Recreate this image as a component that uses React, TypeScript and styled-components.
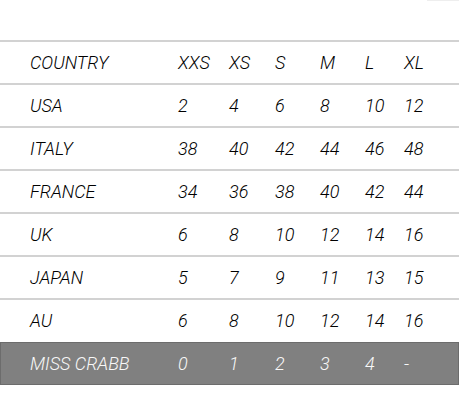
import styled, { createGlobalStyle } from "styled-components";

const SIZES = ["XXS", "XS", "S", "M", "L", "XL"];

const ROWS: { country: string; values: string[]; brand?: boolean }[] = [
  { country: "USA", values: ["2", "4", "6", "8", "10", "12"] },
  { country: "ITALY", values: ["38", "40", "42", "44", "46", "48"] },
  { country: "FRANCE", values: ["34", "36", "38", "40", "42", "44"] },
  { country: "UK", values: ["6", "8", "10", "12", "14", "16"] },
  { country: "JAPAN", values: ["5", "7", "9", "11", "13", "15"] },
  { country: "AU", values: ["6", "8", "10", "12", "14", "16"] },
  { country: "MISS CRABB", values: ["0", "1", "2", "3", "4", "-"], brand: true },
];

const GlobalStyle = createGlobalStyle`
  html, body {
    margin: 0;
    padding: 0;
    background: #ffffff;
  }
  body {
    font-family: Roboto, "Liberation Sans", sans-serif;
  }
`;

export default function App() {
  return (
    <>
      <GlobalStyle />
      <Page>
        <TopStrip>
          <TopEdge />
        </TopStrip>
        <Table>
          <Row>
            <Cell>COUNTRY</Cell>
            {SIZES.map((s) => (
              <Cell key={s}>{s}</Cell>
            ))}
          </Row>
          {ROWS.map((r) => (
            <Row key={r.country} $brand={r.brand}>
              <Cell>{r.country}</Cell>
              {r.values.map((v, i) => (
                <Cell key={i}>{v}</Cell>
              ))}
            </Row>
          ))}
        </Table>
      </Page>
    </>
  );
}

const Page = styled.div`
  width: 459px;
  height: 415px;
  display: flex;
  flex-direction: column;
`;

const TopStrip = styled.div`
  height: 40px;
  display: flex;
  justify-content: flex-end;
`;

const TopEdge = styled.div`
  width: 32px;
  height: 0;
  border-top: 1px solid #eeeeee;
`;

const Table = styled.div`
  display: flex;
  flex-direction: column;
`;

const Row = styled.div<{ $brand?: boolean }>`
  display: grid;
  grid-template-columns: 148px 51px 46px 45px 45px 39px 1fr;
  align-items: center;
  height: 41px;
  padding-left: 30px;
  border-top: 2px solid #d2d2d2;
  background: transparent;
  color: #000000;

  ${(p) =>
    p.$brand &&
    `
    margin-top: 1px;
    border: 1px solid #6c6c6c;
    padding-left: 29px;
    background: #808080;
    color: #f8f8f8;
  `}
`;

const Cell = styled.div`
  font-size: 18px;
  font-style: italic;
  font-weight: 300;
  white-space: nowrap;
  line-height: 1;
  padding-top: 1px;
`;
